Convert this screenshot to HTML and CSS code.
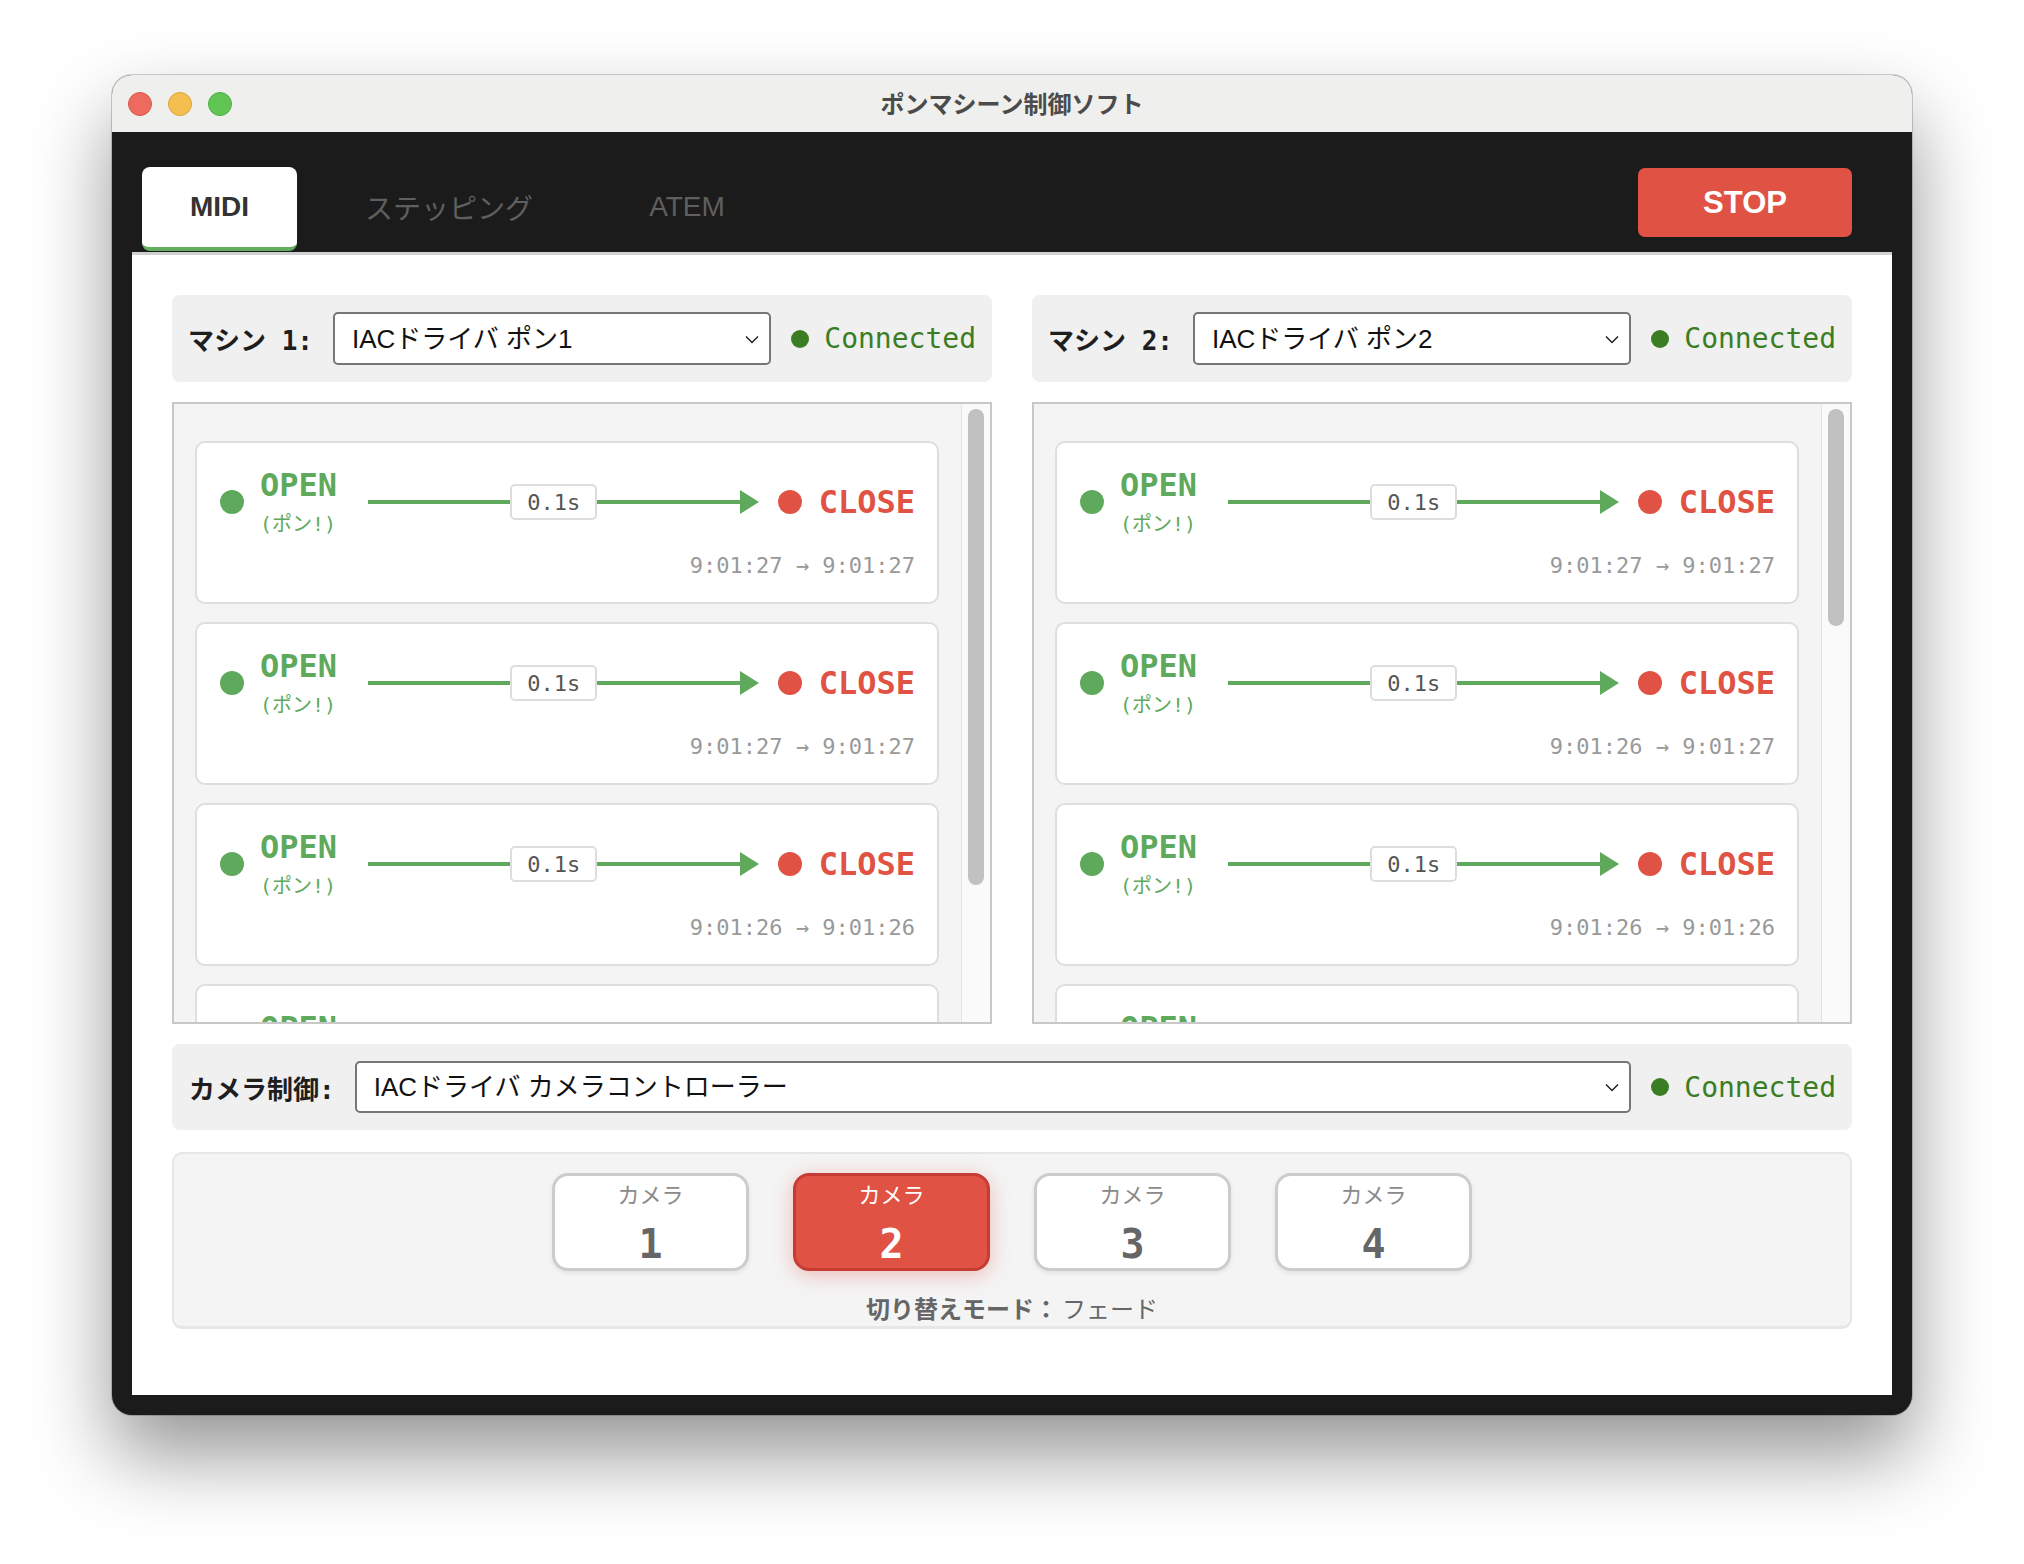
FILE: index.html
```html
<!DOCTYPE html>
<html lang="ja">
<head>
<meta charset="utf-8">
<title>ポンマシーン制御ソフト</title>
<link rel="stylesheet" href="styles.css">
</head>
<body>
<div class="window">
  <div class="titlebar">
    <div class="lights">
      <span class="light red"></span>
      <span class="light yellow"></span>
      <span class="light green"></span>
    </div>
    <div class="title">ポンマシーン制御ソフト</div>
    <div></div>
  </div>
  <div class="appframe">
    <div class="tabbar">
      <div class="tabs">
        <button class="tab active">MIDI</button>
        <button class="tab">ステッピング</button>
        <button class="tab">ATEM</button>
      </div>
      <button class="stop">STOP</button>
    </div>
    <div class="content">
      <div class="machines">
        <div class="machine">
          <div class="device-bar">
            <span class="device-label">マシン 1:</span>
            <div class="select-wrap">
              <select class="device-select"><option>IACドライバ ポン1</option></select>
              <svg class="chevron" width="14" height="9" viewBox="0 0 14 9"><path d="M1 1.5 L7 7.5 L13 1.5" fill="none" stroke="#222" stroke-width="1.5"/></svg>
            </div>
            <div class="status"><span class="status-dot"></span>Connected</div>
          </div>
          <div class="log">
            <div class="log-list">
              <div class="card"><div class="flow"><span class="dot dot-open"></span><div class="open-block"><div class="open">OPEN</div><div class="pon">(ポン!)</div></div><div class="arrow"><span class="line"></span><span class="dur">0.1s</span><span class="line"></span><svg class="head" width="19" height="24" viewBox="0 0 19 24"><path d="M0 0 L19 12 L0 24 Z" fill="#5ea95b"/></svg></div><span class="dot dot-close"></span><span class="close">CLOSE</span></div><div class="time">9:01:27 → 9:01:27</div></div>
              <div class="card"><div class="flow"><span class="dot dot-open"></span><div class="open-block"><div class="open">OPEN</div><div class="pon">(ポン!)</div></div><div class="arrow"><span class="line"></span><span class="dur">0.1s</span><span class="line"></span><svg class="head" width="19" height="24" viewBox="0 0 19 24"><path d="M0 0 L19 12 L0 24 Z" fill="#5ea95b"/></svg></div><span class="dot dot-close"></span><span class="close">CLOSE</span></div><div class="time">9:01:27 → 9:01:27</div></div>
              <div class="card"><div class="flow"><span class="dot dot-open"></span><div class="open-block"><div class="open">OPEN</div><div class="pon">(ポン!)</div></div><div class="arrow"><span class="line"></span><span class="dur">0.1s</span><span class="line"></span><svg class="head" width="19" height="24" viewBox="0 0 19 24"><path d="M0 0 L19 12 L0 24 Z" fill="#5ea95b"/></svg></div><span class="dot dot-close"></span><span class="close">CLOSE</span></div><div class="time">9:01:26 → 9:01:26</div></div>
              <div class="card"><div class="flow"><span class="dot dot-open"></span><div class="open-block"><div class="open">OPEN</div><div class="pon">(ポン!)</div></div><div class="arrow"><span class="line"></span><span class="dur">0.1s</span><span class="line"></span><svg class="head" width="19" height="24" viewBox="0 0 19 24"><path d="M0 0 L19 12 L0 24 Z" fill="#5ea95b"/></svg></div><span class="dot dot-close"></span><span class="close">CLOSE</span></div><div class="time">9:01:26 → 9:01:26</div></div>
            </div>
            <div class="scrollbar"><div class="thumb" style="height: 476px"></div></div>
          </div>
        </div>
        <div class="machine">
          <div class="device-bar">
            <span class="device-label">マシン 2:</span>
            <div class="select-wrap">
              <select class="device-select"><option>IACドライバ ポン2</option></select>
              <svg class="chevron" width="14" height="9" viewBox="0 0 14 9"><path d="M1 1.5 L7 7.5 L13 1.5" fill="none" stroke="#222" stroke-width="1.5"/></svg>
            </div>
            <div class="status"><span class="status-dot"></span>Connected</div>
          </div>
          <div class="log">
            <div class="log-list">
              <div class="card"><div class="flow"><span class="dot dot-open"></span><div class="open-block"><div class="open">OPEN</div><div class="pon">(ポン!)</div></div><div class="arrow"><span class="line"></span><span class="dur">0.1s</span><span class="line"></span><svg class="head" width="19" height="24" viewBox="0 0 19 24"><path d="M0 0 L19 12 L0 24 Z" fill="#5ea95b"/></svg></div><span class="dot dot-close"></span><span class="close">CLOSE</span></div><div class="time">9:01:27 → 9:01:27</div></div>
              <div class="card"><div class="flow"><span class="dot dot-open"></span><div class="open-block"><div class="open">OPEN</div><div class="pon">(ポン!)</div></div><div class="arrow"><span class="line"></span><span class="dur">0.1s</span><span class="line"></span><svg class="head" width="19" height="24" viewBox="0 0 19 24"><path d="M0 0 L19 12 L0 24 Z" fill="#5ea95b"/></svg></div><span class="dot dot-close"></span><span class="close">CLOSE</span></div><div class="time">9:01:26 → 9:01:27</div></div>
              <div class="card"><div class="flow"><span class="dot dot-open"></span><div class="open-block"><div class="open">OPEN</div><div class="pon">(ポン!)</div></div><div class="arrow"><span class="line"></span><span class="dur">0.1s</span><span class="line"></span><svg class="head" width="19" height="24" viewBox="0 0 19 24"><path d="M0 0 L19 12 L0 24 Z" fill="#5ea95b"/></svg></div><span class="dot dot-close"></span><span class="close">CLOSE</span></div><div class="time">9:01:26 → 9:01:26</div></div>
              <div class="card"><div class="flow"><span class="dot dot-open"></span><div class="open-block"><div class="open">OPEN</div><div class="pon">(ポン!)</div></div><div class="arrow"><span class="line"></span><span class="dur">0.1s</span><span class="line"></span><svg class="head" width="19" height="24" viewBox="0 0 19 24"><path d="M0 0 L19 12 L0 24 Z" fill="#5ea95b"/></svg></div><span class="dot dot-close"></span><span class="close">CLOSE</span></div><div class="time">9:01:26 → 9:01:26</div></div>
            </div>
            <div class="scrollbar"><div class="thumb" style="height: 217px"></div></div>
          </div>
        </div>
      </div>
      <div class="device-bar camera-bar">
        <span class="device-label">カメラ制御:</span>
        <div class="select-wrap">
          <select class="device-select cam-select"><option>IACドライバ カメラコントローラー</option></select>
          <svg class="chevron" width="14" height="9" viewBox="0 0 14 9"><path d="M1 1.5 L7 7.5 L13 1.5" fill="none" stroke="#222" stroke-width="1.5"/></svg>
        </div>
        <div class="status"><span class="status-dot"></span>Connected</div>
      </div>
      <div class="camera-panel">
        <div class="cam-buttons">
          <button class="cam-btn"><span class="cam-name">カメラ</span><span class="cam-num">1</span></button>
          <button class="cam-btn active"><span class="cam-name">カメラ</span><span class="cam-num">2</span></button>
          <button class="cam-btn"><span class="cam-name">カメラ</span><span class="cam-num">3</span></button>
          <button class="cam-btn"><span class="cam-name">カメラ</span><span class="cam-num">4</span></button>
        </div>
        <div class="mode"><span class="mode-label">切り替えモード：</span><span class="mode-value">フェード</span></div>
      </div>
    </div>
  </div>
</div>
</body>
</html>
```

FILE: styles.css
```css
html, body {
  margin: 0;
  padding: 0;
}
body {
  background: #ffffff;
  width: 2024px;
  height: 1564px;
  overflow: hidden;
  font-family: "DejaVu Sans Mono", "Noto Sans CJK JP", monospace;
}

.window {
  margin: 75px 0 0 112px;
  width: 1800px;
  height: 1340px;
  border-radius: 20px;
  background: #1b1b1b;
  box-shadow: 0 0 0 1px rgba(0,0,0,0.18), 0 40px 80px rgba(0,0,0,0.42);
  overflow: hidden;
  display: flex;
  flex-direction: column;
}

.titlebar {
  height: 57px;
  flex-shrink: 0;
  background: #efefed;
  display: grid;
  grid-template-columns: 1fr auto 1fr;
  align-items: center;
  padding: 0 16px;
  box-sizing: border-box;
}
.lights {
  display: flex;
  gap: 16px;
}
.light {
  width: 24px;
  height: 24px;
  border-radius: 50%;
  box-sizing: border-box;
}
.light.red { background: #ee6a5f; border: 1px solid #d6574d; }
.light.yellow { background: #f5bf4f; border: 1px solid #d9a53c; }
.light.green { background: #61c554; border: 1px solid #4fae44; }
.title {
  font-family: "Noto Sans CJK JP", sans-serif;
  font-weight: bold;
  font-size: 24px;
  color: #4b4b4b;
  margin-bottom: 3px;
}

.appframe {
  flex: 1;
  display: flex;
  flex-direction: column;
  padding: 0 20px 20px;
}

.tabbar {
  height: 120px;
  flex-shrink: 0;
  box-sizing: border-box;
  padding: 35px 40px 0 10px;
  display: flex;
  justify-content: space-between;
  align-items: flex-start;
}
.tabs {
  display: flex;
  gap: 20px;
}
.tab {
  height: 84px;
  padding: 0 48px;
  border: none;
  border-bottom: 4px solid transparent;
  border-radius: 8px;
  background: transparent;
  font-family: "Liberation Sans", "Noto Sans CJK JP", sans-serif;
  font-size: 28px;
  color: #5f5f5f;
}
.tab.active {
  background: #ffffff;
  color: #333333;
  font-weight: bold;
  border-bottom-color: #65ad5f;
}
.stop {
  margin-top: 1px;
  width: 214px;
  height: 69px;
  border: none;
  border-radius: 7px;
  background: #e05244;
  color: #ffffff;
  font-family: "Liberation Sans", sans-serif;
  font-weight: bold;
  font-size: 31px;
}

.content {
  flex: 1;
  background: #ffffff;
  border-top: 3px solid #d0d0d0;
  padding: 40px 40px 0;
  display: flex;
  flex-direction: column;
}

.machines {
  display: grid;
  grid-template-columns: 1fr 1fr;
  gap: 40px;
}
.machine {
  display: flex;
  flex-direction: column;
  gap: 20px;
  min-width: 0;
}

.device-bar {
  background: #f0f0f0;
  border-radius: 8px;
  padding: 17px 16px 17px 16px;
  display: flex;
  align-items: center;
  gap: 20px;
}
.device-label {
  font-weight: bold;
  font-size: 26px;
  color: #1e1e1e;
  white-space: pre;
}
.select-wrap {
  flex: 1;
  position: relative;
  min-width: 0;
}
.device-select {
  width: 100%;
  height: 53px;
  box-sizing: border-box;
  -webkit-appearance: none;
  appearance: none;
  border: 2px solid #767676;
  border-radius: 5px;
  background: #ffffff;
  padding: 0 40px 0 17px;
  font-family: "Liberation Sans", "Noto Sans CJK JP", sans-serif;
  font-size: 26px;
  color: #111111;
}
.chevron {
  position: absolute;
  right: 12px;
  top: 50%;
  margin-top: -4px;
}
.status {
  display: flex;
  align-items: center;
  gap: 15px;
  font-size: 28px;
  color: #3b7d23;
}
.status-dot {
  width: 18px;
  height: 18px;
  border-radius: 50%;
  background: #3b7d23;
}

.log {
  height: 622px;
  box-sizing: border-box;
  border: 2px solid #c8c8c8;
  background: #f4f4f4;
  display: flex;
  overflow: hidden;
}
.log-list {
  flex: 1;
  min-width: 0;
  overflow: hidden;
  padding: 37px 22px 0 21px;
  display: flex;
  flex-direction: column;
  gap: 18px;
}
.scrollbar {
  width: 29px;
  flex-shrink: 0;
  box-sizing: border-box;
  background: #fafafa;
  border-left: 1px solid #e4e4e4;
  padding: 5px 6px 0 6px;
}
.thumb {
  width: 16px;
  border-radius: 8px;
  background: #c1c1c1;
}

.card {
  flex-shrink: 0;
  background: #ffffff;
  border: 2px solid #dedede;
  border-radius: 10px;
  padding: 25px 22px 23px 23px;
}
.flow {
  display: flex;
  align-items: center;
}
.dot {
  width: 24px;
  height: 24px;
  border-radius: 50%;
  flex-shrink: 0;
}
.dot-open { background: #5ea95b; }
.dot-close { background: #e05244; margin-left: 19px; }
.open-block {
  margin-left: 16px;
  width: 77px;
}
.open {
  font-weight: bold;
  font-size: 32px;
  line-height: 34px;
  color: #5ea95b;
}
.pon {
  font-size: 20px;
  line-height: 24px;
  color: #5ea95b;
  margin-top: 10px;
  white-space: nowrap;
}
.arrow {
  flex: 1;
  margin-left: 31px;
  display: flex;
  align-items: center;
}
.line {
  flex: 1;
  height: 4px;
  background: #5ea95b;
}
.head {
  display: block;
  flex-shrink: 0;
}
.dur {
  width: 87px;
  height: 36px;
  box-sizing: border-box;
  border: 2px solid #dddddd;
  border-radius: 5px;
  background: #ffffff;
  display: flex;
  align-items: center;
  justify-content: center;
  font-size: 22px;
  color: #555555;
}
.close {
  margin-left: 17px;
  font-weight: bold;
  font-size: 32px;
  color: #e05244;
}
.time {
  margin-top: 17px;
  text-align: right;
  font-size: 22px;
  line-height: 26px;
  color: #999999;
}

.camera-bar {
  margin-top: 20px;
  padding-left: 17px;
}
.camera-bar .device-select {
  height: 52px;
}

.camera-panel {
  margin-top: 22px;
  background: #f4f4f4;
  border: 2px solid #e6e6e6;
  border-bottom-width: 3px;
  border-radius: 10px;
  padding: 19px 0 0;
  height: 177px;
  box-sizing: border-box;
}
.cam-buttons {
  display: flex;
  justify-content: center;
  gap: 44px;
}
.cam-btn {
  width: 197px;
  height: 98px;
  box-sizing: border-box;
  border: 3px solid #cccccc;
  border-radius: 16px;
  background: #ffffff;
  box-shadow: 0 2px 5px rgba(0,0,0,0.08);
  display: flex;
  flex-direction: column;
  align-items: center;
  padding: 6px 0 0;
  font-family: "DejaVu Sans Mono", "Noto Sans CJK JP", monospace;
  color: #666666;
}
.cam-btn.active {
  background: #e05244;
  border-color: #c43c33;
  box-shadow: 0 4px 20px rgba(224,82,68,0.35);
  color: #ffffff;
}
.cam-name {
  font-size: 22px;
  line-height: 28px;
  color: #8a8a8a;
}
.cam-btn.active .cam-name {
  color: #ffffff;
}
.cam-num {
  font-weight: bold;
  font-size: 40px;
  line-height: 48px;
  margin-top: 10px;
}
.mode {
  margin-top: 23px;
  text-align: center;
  font-family: "Noto Sans CJK JP", sans-serif;
  font-size: 24px;
  line-height: 28px;
  color: #666666;
}
.mode-label {
  font-weight: bold;
}
.mode-value {
  margin-left: 4px;
}
```
